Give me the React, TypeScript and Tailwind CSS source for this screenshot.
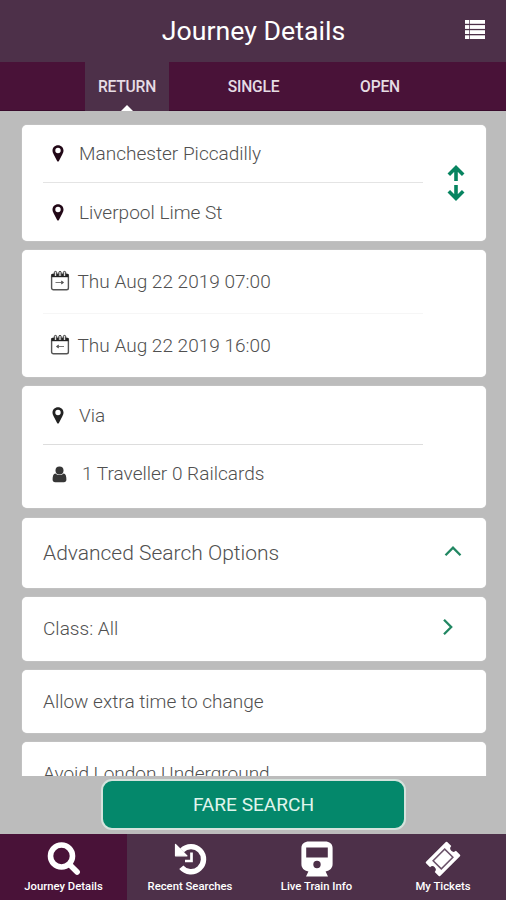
import type { ReactNode } from 'react';
import { clsx } from 'clsx';

const PinIcon = () => (
  <svg viewBox="0 0 12 17" className="h-[17px] w-[12px] shrink-0" fill="currentColor">
    <path
      fillRule="evenodd"
      d="M6 0.3C2.8 0.3 0.5 2.6 0.5 5.6c0 1.4.5 2.4 1.1 3.6L5.1 16c.3.8 1.5.8 1.8 0l3.5-6.8c.6-1.2 1.1-2.2 1.1-3.6C11.5 2.6 9.2.3 6 .3ZM6 2.8a2.700 2.700 0 1 1 0 5.400 2.700 2.700 0 0 1 0-5.400Z"
    />
  </svg>
);

const CalendarIcon = ({ back = false }: { back?: boolean }) => (
  <svg viewBox="0 0 20 21" className="mb-[3px] h-[21px] w-[20px] shrink-0" fill="none">
    <rect x="1.6" y="4.3" width="16.8" height="15.4" rx="1.8" stroke="#555" strokeWidth="1.4" />
    <path d="M1.5 4h17v3.2h-17Z" fill="#222" />
    <path
      d="M4.3 6V2.6a1.2 1.2 0 0 1 2.4 0V6M8.8 6V2.6a1.2 1.2 0 0 1 2.4 0V6M13.3 6V2.6a1.2 1.2 0 0 1 2.4 0V6"
      fill="#ddd"
      stroke="#333"
      strokeWidth="1"
    />
    {back ? (
      <path d="M7.5 12.5H14M6.3 12.5l2.2-1.5v3Z" stroke="#666" strokeWidth="0.9" fill="#333" />
    ) : (
      <path d="M5.5 12.5h7M13.7 12.5l-2.2-1.5v3Z" stroke="#666" strokeWidth="0.9" fill="#333" />
    )}
  </svg>
);

const PersonIcon = () => (
  <svg viewBox="0 0 15 17" className="h-[17px] w-[15px] shrink-0" fill="#363636">
    <circle cx="7.5" cy="4.5" r="4" />
    <path d="M3.4 7.5C1.3 7.9.6 10 .6 13.5c0 1.8 1 2.7 2.5 2.7h8.8c1.5 0 2.5-.9 2.5-2.7 0-3.5-.7-5.6-2.8-6A5.7 5.7 0 0 1 7.5 9.1a5.7 5.7 0 0 1-4.1-1.6Z" />
  </svg>
);

const SwapIcon = () => (
  <svg viewBox="0 0 18 36" className="h-[36px] w-[18px]" fill="none" stroke="#078460" strokeWidth="3.6">
    <path d="M9 16V3M1.8 9.8 9 2.6l7.2 7.2" />
    <path d="M9 20v13M1.8 26.2 9 33.4l7.2-7.2" />
  </svg>
);

const MenuIcon = () => (
  <svg viewBox="0 0 20 19" className="h-[19px] w-[20px]" fill="#fff">
    {[0, 5.1, 10.2, 15.3].map(y => (
      <g key={y}>
        <rect x="0" y={y} width="4.3" height="3.8" />
        <rect x="5" y={y} width="15" height="3.8" />
      </g>
    ))}
  </svg>
);

const SearchIcon = () => (
  <svg viewBox="0 0 34 34" className="h-[34px] w-[34px]" fill="none" stroke="#fff">
    <circle cx="14.5" cy="14" r="11" strokeWidth="5.6" />
    <path d="m22.5 22.5 7.6 7.6" strokeWidth="5.6" strokeLinecap="round" />
  </svg>
);

const HistoryIcon = () => (
  <svg viewBox="0 0 34 34" className="h-[34px] w-[34px]" fill="none" stroke="#fff">
    <path d="M9 8.300A12.600 12.600 0 1 1 8.300 25.300" strokeWidth="5.400" />
    <path d="M2.500 2.300v11.500H14Z" fill="#fff" strokeWidth="1.2" strokeLinejoin="round" />
    <path d="M18.500 10.500v8.500H12" strokeWidth="2.7" />
  </svg>
);

const TrainIcon = () => (
  <svg viewBox="0 0 34 36" className="h-[36px] w-[34px]" fill="#fff">
    <path
      fillRule="evenodd"
      d="M9 .5C4.500.5 1.400 2.700 1.400 7v16c0 4 2.500 6.500 7 7.500l-2.400 5h22l-2.400-5c4.500-1 7-3.500 7-7.500V7c0-4.300-3.100-6.500-7.600-6.500H9ZM6.200 6.500h21.600v10H6.200v-10ZM17 19.800a3.700 3.700 0 1 1 0 7.400 3.700 3.700 0 0 1 0-7.400Z"
    />
  </svg>
);

const TicketIcon = () => (
  <svg viewBox="0 0 36 36" className="h-[36px] w-[36px]">
    <g transform="rotate(-45 18 18)">
      <path
        d="M4 8h28q1 0 1 1v5.700a3.300 3.300 0 0 0 0 6.600V27q0 1-1 1H4q-1 0-1-1v-5.700a3.300 3.300 0 0 0 0-6.600V9q0-1 1-1Z"
        fill="#fff"
      />
      <rect x="9.8" y="12.2" width="16.4" height="11.6" fill="#fff" stroke="#6a5269" strokeWidth="1.5" />
    </g>
  </svg>
);

const tabs = ['RETURN', 'SINGLE', 'OPEN'];

const navItems = [
  { label: 'Journey Details', icon: <SearchIcon /> },
  { label: 'Recent Searches', icon: <HistoryIcon /> },
  { label: 'Live Train Info', icon: <TrainIcon /> },
  { label: 'My Tickets', icon: <TicketIcon /> },
];

const Card = ({ className, children }: { className?: string; children: ReactNode }) => (
  <section className={clsx('shrink-0 rounded-[5px] bg-white pl-[21px] shadow-[0_0_1px_#eee]', className)}>{children}</section>
);

const Divider = ({ className = 'bg-[#e4e4e4]' }: { className?: string }) => (
  <div className={clsx('h-px w-[380px] shrink-0', className)} />
);

export default function App() {
  return (
    <div className="flex h-[900px] w-[506px] flex-col overflow-hidden bg-[#bcbcbc] font-['Roboto',sans-serif] font-light text-[#505050]">
      <header className="grid h-[62px] shrink-0 grid-cols-[57px_1fr_56px] items-center bg-[#4d3049] text-white">
        <h1 className="col-start-2 text-center text-[26.7px] leading-[60px] font-normal">Journey Details</h1>
        <button className="-mt-[3px] ml-[15px]" aria-label="Menu">
          <MenuIcon />
        </button>
      </header>

      <nav className="flex h-[49px] shrink-0 border-b border-[#390b2c] bg-[#491238] pl-[85px]">
        {tabs.map((tab, i) => (
          <button
            key={tab}
            className={clsx(
              'relative flex h-[49px] items-center justify-center pt-[2px] text-[15.6px] font-medium tracking-[-0.2px] text-[#e6dce4]',
              i === 0 ? 'w-[84px] bg-[#4d3049]' : i === 1 ? 'w-[169px]' : 'w-[84px]',
            )}
          >
            {tab}
            {i === 0 && (
              <svg viewBox="0 0 12 6" className="absolute bottom-0 left-[36px] h-[6px] w-[12px]" fill="#fff">
                <path d="M0 6 6 0l6 6Z" />
              </svg>
            )}
          </button>
        ))}
      </nav>

      <main className="flex h-[665px] shrink-0 flex-col overflow-hidden pt-[14px] pr-[20px] pl-[22px] text-[19.05px]">
        <Card className="flex h-[116px]">
          <div className="flex w-[380px] flex-col">
            <div className="flex h-[57px] items-center gap-[15px] pl-[9px] text-[#220817]">
              <PinIcon />
              <span className="pt-px text-[#505050]">Manchester Piccadilly</span>
            </div>
            <Divider />
            <div className="flex h-[58px] items-center gap-[15px] pl-[9px] text-[#220817]">
              <PinIcon />
              <span className="pt-[2px] text-[#505050]">Liverpool Lime St</span>
            </div>
          </div>
          <button className="ml-[24px]" aria-label="Swap stations">
            <SwapIcon />
          </button>
        </Card>

        <Card className="mt-[9px] h-[127px]">
          <div className="flex h-[63px] items-center gap-[8px] pl-[6.5px]">
            <CalendarIcon />
            <span className="pt-px">Thu Aug 22 2019 07:00</span>
          </div>
          <Divider className="bg-[#f6f6f6]" />
          <div className="flex h-[63px] items-center gap-[8px] pl-[6.5px]">
            <CalendarIcon back />
            <span className="pt-px">Thu Aug 22 2019 16:00</span>
          </div>
        </Card>

        <Card className="mt-[9px] h-[122px]">
          <div className="flex h-[58px] items-center gap-[15px] pl-[9px] text-[#222]">
            <PinIcon />
            <span className="pt-[2px] text-[#505050]">Via</span>
          </div>
          <Divider className="bg-[#dddddd]" />
          <div className="flex h-[58px] items-center gap-[15px] pl-[9px]">
            <PersonIcon />
            <span className="pt-px">1 Traveller 0 Railcards</span>
          </div>
        </Card>

        <Card className="mt-[10px] flex h-[70px] items-center justify-between pr-[24px] text-[21px]">
          <span className="pt-px">Advanced Search Options</span>
          <svg viewBox="0 0 18 12" className="mb-[4px] h-[12px] w-[18px]" fill="none" stroke="#218762" strokeWidth="2.3">
            <path d="m1.5 10.2 7.5-7.5 7.5 7.5" />
          </svg>
        </Card>

        <Card className="mt-[9px] flex h-[64px] items-center justify-between pr-[32px]">
          <span>Class: All</span>
          <svg viewBox="0 0 12 18" className="mb-[4px] h-[18px] w-[12px]" fill="none" stroke="#218762" strokeWidth="2.3">
            <path d="M2 1.8 9.2 9 2 16.2" />
          </svg>
        </Card>

        <Card className="mt-[9px] flex h-[63px] items-center pt-px">Allow extra time to change</Card>
        <Card className="mt-[9px] flex h-[63px] items-center pt-px">Avoid London Underground</Card>
      </main>

      <div className="flex h-[58px] shrink-0 justify-center pt-[3px] pl-px">
        <button className="h-[51px] w-[305px] rounded-[11px] border-2 border-[#d5e3dd] bg-[#04886b] pt-px text-[19.1px] font-normal text-[#e0f5ed]">
          FARE SEARCH
        </button>
      </div>

      <footer className="grid h-[66px] shrink-0 grid-cols-[127px_126px_127px_126px] bg-[#4d3049]">
        {navItems.map((item, i) => (
          <button key={item.label} className={clsx('flex flex-col items-center text-white', i === 0 && 'bg-[#491238]')}>
            <span className="flex h-[45px] items-center pt-[5px]">{item.icon}</span>
            <span className="pt-px text-[11.3px] leading-[14px] font-medium">{item.label}</span>
          </button>
        ))}
      </footer>
    </div>
  );
}
